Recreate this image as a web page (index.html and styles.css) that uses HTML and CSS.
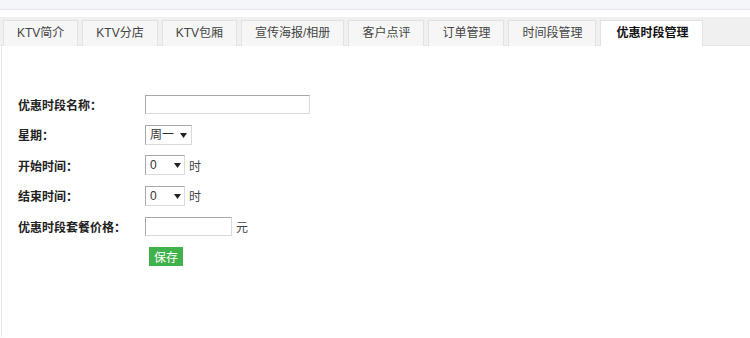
FILE: index.html
```html
<!DOCTYPE html>
<html lang="zh">
<head>
	<meta charset="UTF-8" />
	<title>优惠时段管理</title>
	<link rel="stylesheet" href="styles.css">
</head>
<body>

<div class="top-strip"></div>

<!-- 顶部标签页 -->
<div class="tab-bar">
	<a class="tab" href="#">KTV简介</a>
	<a class="tab" href="#">KTV分店</a>
	<a class="tab" href="#">KTV包厢</a>
	<a class="tab" href="#">宣传海报/相册</a>
	<a class="tab" href="#">客户点评</a>
	<a class="tab" href="#">订单管理</a>
	<a class="tab" href="#">时间段管理</a>
	<a class="tab active" href="#">优惠时段管理</a>
</div>

<div class="content">
	<form class="form">
		<div class="row">
			<label for="name">优惠时段名称：</label>
			<input type="text" id="name" class="text-long">
		</div>
		<div class="row">
			<label for="week">星期：</label>
			<select id="week" class="sel-week">
				<option>周一</option>
				<option>周二</option>
				<option>周三</option>
				<option>周四</option>
				<option>周五</option>
				<option>周六</option>
				<option>周日</option>
			</select>
		</div>
		<div class="row">
			<label for="start">开始时间：</label>
			<select id="start" class="sel-hour">
				<option>0</option>
			</select>
			<span class="unit">时</span>
		</div>
		<div class="row">
			<label for="end">结束时间：</label>
			<select id="end" class="sel-hour">
				<option>0</option>
			</select>
			<span class="unit">时</span>
		</div>
		<div class="row">
			<label for="price">优惠时段套餐价格：</label>
			<input type="text" id="price" class="text-short">
			<span class="unit">元</span>
		</div>
		<div class="row">
			<label></label>
			<button type="button" class="save">保存</button>
		</div>
	</form>
</div>

</body>
</html>
```

FILE: styles.css
```css
* {
	box-sizing: border-box;
}

body {
	margin: 0;
	font-family: 'Liberation Sans', 'Noto Sans CJK SC', sans-serif;
	font-size: 12px;
	color: #333;
	background-color: #fff;
}

.top-strip {
	height: 10px;
	background-color: #f5f6f9;
	border-bottom: 1px solid #e3e6eb;
	margin-bottom: 7px;
}

/* 标签栏 */
.tab-bar {
	display: flex;
	align-items: flex-end;
	height: 29px;
	padding-left: 3px;
	background-color: #f0f0f0;
	border-bottom: 1px solid #e4e6ea;
}

.tab {
	display: block;
	height: 26px;
	line-height: 24px;
	padding: 0 13px;
	margin-right: 4px;
	margin-bottom: -1px;
	background-color: #f6f6f6;
	border: 1px solid #dfe2e6;
	border-bottom: none;
	color: #444;
	text-decoration: none;
	white-space: nowrap;
}

.tab.active {
	background-color: #fff;
	color: #111;
	font-weight: bold;
	padding: 0 14px 0 15px;
}

.content {
	height: 291px;
	margin-left: 1px;
	border-left: 1px solid #e6e8ec;
	background-color: #fff;
}

.form {
	padding: 43px 0 0 16px;
}

.row {
	display: flex;
	align-items: center;
	height: 30.5px;
}

.row label {
	width: 127px;
	font-weight: bold;
	color: #222;
	font-family: 'Noto Sans CJK SC', sans-serif;
}

input[type="text"] {
	height: 19px;
	border: 1px solid #dadada;
	border-top-color: #a8a8a8;
	border-left-color: #a8a8a8;
	padding: 0 3px;
	font-size: 12px;
	outline: none;
}

.text-long {
	width: 165px;
}

.text-short {
	width: 87px;
}

select {
	appearance: none;
	-webkit-appearance: none;
	height: 20px;
	padding: 0 0 0 4px;
	font-size: 12px;
	font-family: 'Liberation Sans', 'Noto Sans CJK SC', sans-serif;
	color: #333;
	border: 1px solid #dadada;
	border-top-color: #a8a8a8;
	border-left-color: #a8a8a8;
	border-radius: 0;
	background: #fff url("data:image/svg+xml;utf8,<svg xmlns='http://www.w3.org/2000/svg' width='7' height='5'><path d='M0 0H7L3.5 5Z' fill='%23222'/></svg>") no-repeat;
	outline: none;
}

.sel-week {
	width: 47px;
	background-position: 34px 7px;
}

.sel-hour {
	width: 40px;
	background-position: 28px 7px;
}

.unit {
	margin-left: 4px;
	color: #444;
}

.save {
	margin-left: 4px;
	height: 19px;
	padding: 0 5px;
	border: none;
	background-color: #40b24b;
	color: #fff;
	font-size: 12px;
	font-family: 'Noto Sans CJK SC', sans-serif;
	line-height: 19px;
	cursor: pointer;
}
```
